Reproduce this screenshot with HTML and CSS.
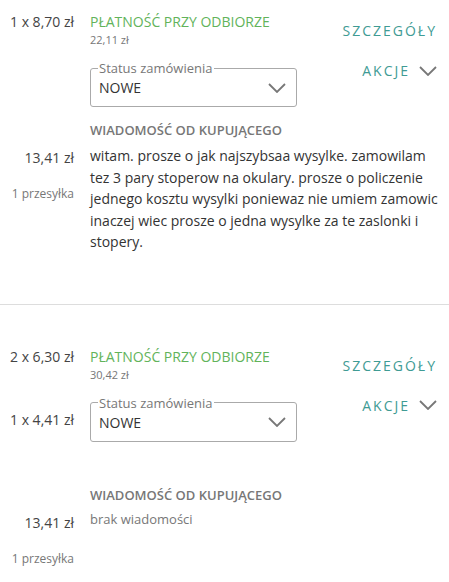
FILE: index.html
```html
<!DOCTYPE html>
<html lang="pl">
<head>
<meta charset="utf-8">
<title>Zamówienia</title>
<link rel="stylesheet" href="styles.css">
</head>
<body>
<div class="orders">
  <section class="order first">
    <div class="items">
      <div class="item">1 x 8,70 zł</div>
    </div>
    <div class="info">
      <div class="pay">PŁATNOŚĆ PRZY ODBIORZE</div>
      <div class="sum">22,11 zł</div>
      <fieldset class="status">
        <legend>Status zamówienia</legend>
        <div class="status-row">
          <span class="status-value">NOWE</span>
          <svg class="chev" width="18" height="10" viewBox="0 0 18 10"><path d="M1 1 L9 9 L17 1" fill="none" stroke="#777" stroke-width="1.8"/></svg>
        </div>
      </fieldset>
    </div>
    <div class="side">
      <a class="link">SZCZEGÓŁY</a>
      <div class="actions"><a class="link">AKCJE</a><svg class="chev" width="18" height="10" viewBox="0 0 18 10"><path d="M1 1 L9 9 L17 1" fill="none" stroke="#777" stroke-width="1.8"/></svg></div>
    </div>
    <div class="totals">
      <div class="total">13,41 zł</div>
      <div class="ship">1 przesyłka</div>
    </div>
    <div class="message">
      <div class="msg-title">WIADOMOŚĆ OD KUPUJĄCEGO</div>
      <p class="msg-text">witam. prosze o jak najszybsaa wysylke. zamowilam tez 3 pary stoperow na okulary. prosze o policzenie jednego kosztu wysylki poniewaz nie umiem zamowic inaczej wiec prosze o jedna wysylke za te zaslonki i stopery.</p>
    </div>
  </section>
  <section class="order last">
    <div class="items">
      <div class="item">2 x 6,30 zł</div>
      <div class="item">1 x 4,41 zł</div>
    </div>
    <div class="info">
      <div class="pay">PŁATNOŚĆ PRZY ODBIORZE</div>
      <div class="sum">30,42 zł</div>
      <fieldset class="status">
        <legend>Status zamówienia</legend>
        <div class="status-row">
          <span class="status-value">NOWE</span>
          <svg class="chev" width="18" height="10" viewBox="0 0 18 10"><path d="M1 1 L9 9 L17 1" fill="none" stroke="#777" stroke-width="1.8"/></svg>
        </div>
      </fieldset>
    </div>
    <div class="side">
      <a class="link">SZCZEGÓŁY</a>
      <div class="actions"><a class="link">AKCJE</a><svg class="chev" width="18" height="10" viewBox="0 0 18 10"><path d="M1 1 L9 9 L17 1" fill="none" stroke="#777" stroke-width="1.8"/></svg></div>
    </div>
    <div class="totals">
      <div class="total">13,41 zł</div>
      <div class="ship">1 przesyłka</div>
    </div>
    <div class="message">
      <div class="msg-title">WIADOMOŚĆ OD KUPUJĄCEGO</div>
      <p class="msg-empty">brak wiadomości</p>
    </div>
  </section>
</div>
</body>
</html>
```
FILE: styles.css
```css
html, body {
  margin: 0;
  padding: 0;
  background: #fff;
}
body {
  font-family: "Open Sans", "Noto Sans", sans-serif;
  color: #333;
  font-size: 14px;
}
.order {
  display: grid;
  grid-template-columns: 74px 1fr auto;
  column-gap: 16px;
  row-gap: 14px;
  padding: 41px 8px 51px 0;
  border-bottom: 1px solid #ddd;
}
.order.first {
  padding-top: 11px;
}
.order.last {
  padding-bottom: 6px;
  border-bottom: 0;
}
.items {
  grid-column: 1;
  grid-row: 1;
  text-align: right;
}
.item {
  height: 63px;
  line-height: 21px;
  font-size: 14px;
  color: #444;
  white-space: nowrap;
}
.info {
  grid-column: 2;
  grid-row: 1;
}
.pay {
  font-size: 14px;
  line-height: 21px;
  color: #62b35a;
}
.sum {
  font-size: 11px;
  line-height: 16px;
  color: #777;
}
.status {
  margin: 11px 0 0;
  padding: 0 10px 8px 7px;
  border: 1px solid #aaa;
  border-radius: 3px;
  width: 207px;
  box-sizing: border-box;
  min-width: 0;
}
.status legend {
  font-size: 13px;
  line-height: 18px;
  color: #777;
  padding: 0 2px 0 1px;
}
.status-row {
  display: flex;
  align-items: center;
  justify-content: space-between;
}
.status-value {
  font-size: 14px;
  line-height: 21px;
  color: #333;
  padding-left: 1px;
}
.chev {
  display: block;
}
.side {
  grid-column: 3;
  grid-row: 1;
  display: flex;
  flex-direction: column;
  align-items: flex-end;
  padding: 9px 4px 0 0;
}
.link {
  font-size: 14px;
  line-height: 21px;
  letter-spacing: 2px;
  color: #3f9b94;
  text-decoration: none;
}
.actions {
  display: flex;
  align-items: center;
  gap: 9px;
  margin-top: 19px;
}
.totals {
  grid-column: 1;
  grid-row: 2;
  text-align: right;
}
.total {
  margin-top: 26px;
  font-size: 14px;
  line-height: 21px;
  color: #444;
}
.ship {
  margin-top: 18px;
  font-size: 12px;
  line-height: 16px;
  color: #777;
  white-space: nowrap;
}
.message {
  grid-column: 2 / 4;
  grid-row: 2;
}
.msg-title {
  font-size: 13px;
  line-height: 18px;
  font-weight: 600;
  color: #777;
}
.msg-text {
  margin: 6px 0 0;
  font-size: 14px;
  line-height: 21.5px;
  color: #333;
}
.msg-empty {
  margin: 6px 0 0;
  font-size: 13px;
  line-height: 18px;
  color: #777;
}
```
